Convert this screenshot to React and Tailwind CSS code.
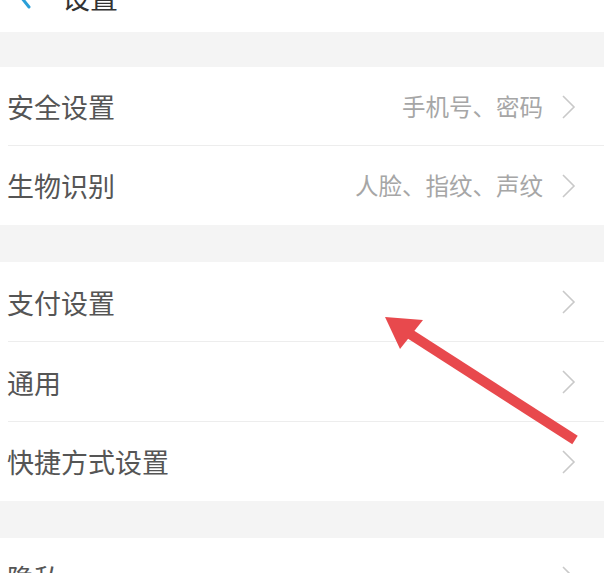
import React from "react";

const Chevron = () => (
  <svg width="16" height="26" viewBox="0 0 16 26" fill="none" className="shrink-0">
    <path d="M2 2 L13 13 L2 24" stroke="#c9c9c9" strokeWidth="1.6" />
  </svg>
);

const Row = ({ title, hint, h, last }) => (
  <div className={`flex items-center pl-[7px] pr-[27px] relative ${h}`}>
    <span className="text-[27px] text-[#555555] leading-none">{title}</span>
    <span className="ml-auto mr-[18px] text-[23.5px] text-[#a6a6a6] leading-none">{hint}</span>
    <Chevron />
    {!last && <div className="absolute left-[8px] right-0 bottom-0 h-px bg-[#ededed]" />}
  </div>
);

const App = () => {
  return (
    <div
      className="relative w-[609px] h-[573px] overflow-hidden bg-white"
      style={{ fontFamily: '"Noto Sans CJK SC", "Noto Sans", sans-serif' }}
    >
      <div className="mr-[5px]">
        {/* header, cut off at top */}
        <div className="h-[32px] overflow-hidden">
          <div className="h-[64px] -mt-[35px] flex items-center pl-[18px]">
            <svg width="14" height="24" viewBox="0 0 14 24" fill="none">
              <path d="M11 2 L3 12 L11 22" stroke="#2a9fd8" strokeWidth="3" strokeLinecap="round" />
            </svg>
            <span className="ml-[30px] text-[28px] text-[#333333] leading-none">设置</span>
          </div>
        </div>
        <div className="h-[35px] bg-[#f4f4f4]" />
        <Row title="安全设置" hint="手机号、密码" h="h-[79px]" />
        <Row title="生物识别" hint="人脸、指纹、声纹" h="h-[79px]" last />
        <div className="h-[37px] bg-[#f4f4f4]" />
        <Row title="支付设置" hint="" h="h-[80px]" />
        <Row title="通用" hint="" h="h-[80px]" />
        <Row title="快捷方式设置" hint="" h="h-[79px]" last />
        <div className="h-[37px] bg-[#f4f4f4]" />
        <Row title="隐私" hint="" h="h-[79px]" last />
      </div>

      {/* red annotation arrow */}
      <svg className="absolute left-0 top-0 pointer-events-none" width="609" height="573" viewBox="0 0 609 573">
        <line x1="575" y1="440" x2="410" y2="334" stroke="#e8494d" strokeWidth="10" strokeLinecap="butt" />
        <polygon points="385,317 423,320 400,349" fill="#e8494d" />
      </svg>
    </div>
  );
};

export default App;
